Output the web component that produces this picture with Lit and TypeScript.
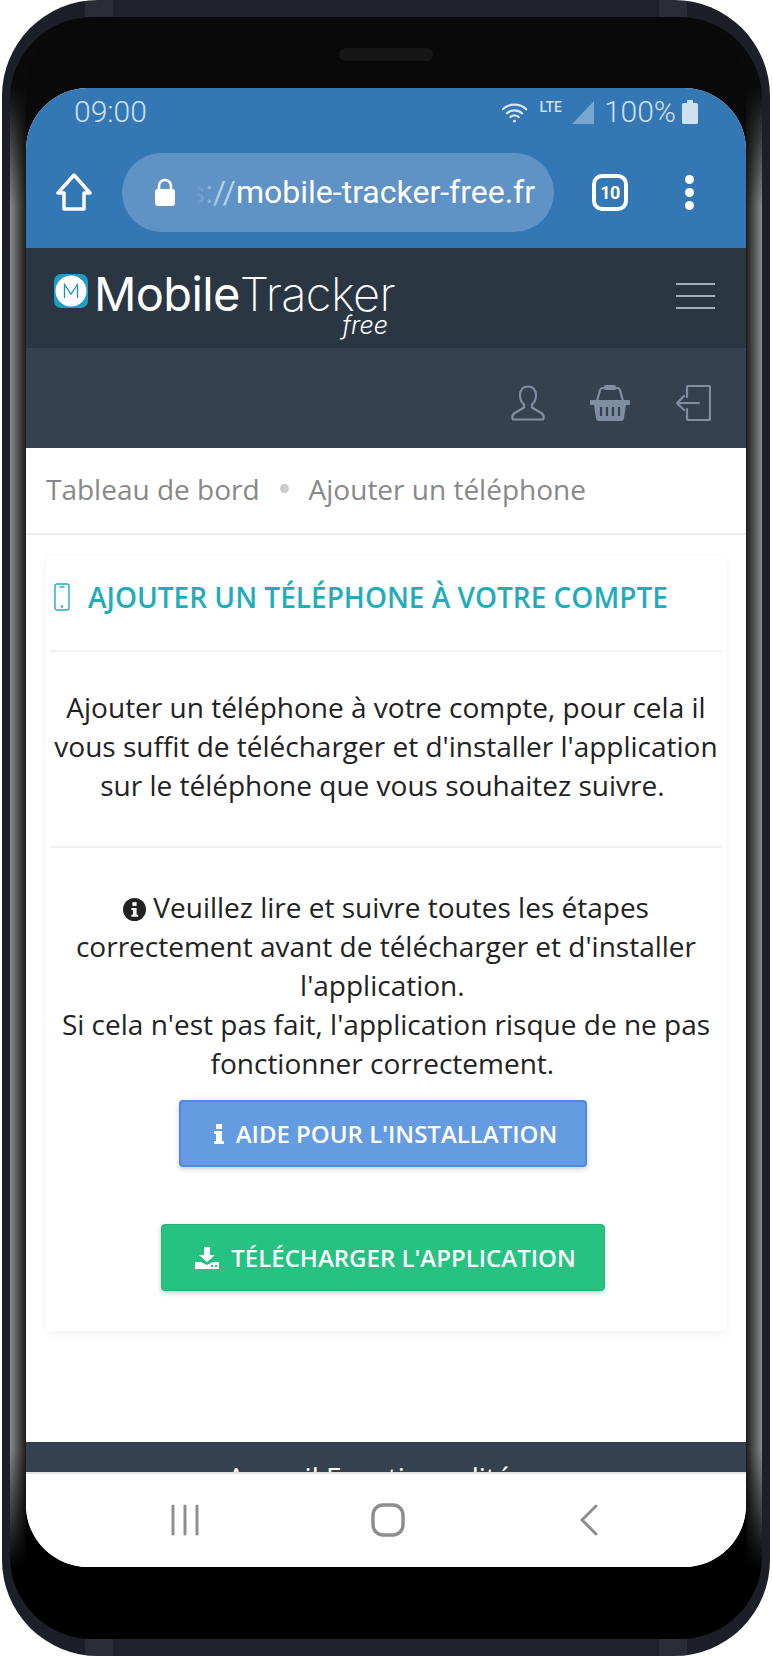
import { LitElement, html, css } from "lit";
import { customElement } from "lit/decorators.js";

@customElement("app-root")
export class AppRoot extends LitElement {
  static styles = css`
    :host { display: block; width: 772px; height: 1656px; background: #fff; font-family: "Open Sans", sans-serif; overflow: hidden; }
    * { box-sizing: border-box; }
    .phone { width: 768px; height: 1656px; margin-left: 2px; padding: 17px 8px; border-radius: 96px; background: linear-gradient(90deg, #1c1f28 83px, #2a2d36 83px, #2a2d36 111px, #20232d 111px, #20232d calc(100% - 111px), #2a2d36 calc(100% - 111px), #2a2d36 calc(100% - 83px), #1c1f28 calc(100% - 83px)); }
    .bezel { height: 100%; border-radius: 82px; padding: 71px 16px 72px; background:
      linear-gradient(#0a0a0a 70px, rgba(10,10,10,0) 190px, rgba(0,0,0,0) calc(100% - 190px), #000 calc(100% - 70px)),
      linear-gradient(90deg, #8a8a8a 0, #1c1c1c 16px, #0a0a0a 17px, #0a0a0a calc(100% - 17px), #1c1c1c calc(100% - 16px), #8a8a8a 100%);
      position: relative; }
    .bezel-in { position: absolute; inset: 0 16px; background: linear-gradient(#090909, #090909 50%, #000 50%, #000); border-radius: 70px; }
    .speaker { position: absolute; top: 31px; left: 50%; width: 94px; height: 13px; margin-left: -47px; background: #161616; border-radius: 7px; }
    .screen { position: relative; height: 1479px; width: 720px; border-radius: 62px; overflow: hidden; background: #fff; display: flex; flex-direction: column; }
    .chrome { background: #3377b5; height: 160px; flex: none; }
    .status { height: 52px; display: flex; align-items: center; padding: 0 48px 5px 48px; color: #cfe0f0; font-family: Roboto, sans-serif; font-size: 30px; }
    .status .time { flex: 1; font-weight: 300; }
    .status svg { display: block; }
    .status .pct { font-weight: 300; margin: 0 6px 0 10px; }
    .lte { font-size: 14px; font-weight: 500; align-self: flex-start; margin: 10px 9px 0 12px; line-height: 18px; }
    .toolbar { display: flex; align-items: center; height: 80px; padding: 0 0 0 30px; margin-top: 12px; }
    .url { width: 432px; height: 79px; margin-left: 30px; border-radius: 40px; background: #5f92c5; display: flex; align-items: center; padding: 0 0 0 32px; color: #fff; font-family: Roboto, sans-serif; font-size: 32px; font-weight: 400; white-space: nowrap; }
    .url .fade { color: #b8d0e8; margin-left: 20px; width: 40px; overflow: hidden; flex: none; display: flex; justify-content: flex-end; -webkit-mask-image: linear-gradient(90deg, transparent, #000 60%); mask-image: linear-gradient(90deg, transparent, #000 60%); }
    .url .fade span { flex: none; }
    .tabs { margin-left: 38px; width: 36px; height: 37px; border: 4px solid #fff; border-radius: 10px; color: #fff; font-family: Roboto, sans-serif; font-weight: 700; font-size: 18px; letter-spacing: -0.5px; display: flex; align-items: center; justify-content: center; }
    .dots { margin-left: 57px; display: flex; flex-direction: column; gap: 4px; }
    .dots i { width: 9px; height: 9px; border-radius: 50%; background: #fff; display: block; }
    .nav1 { background: #2b3643; height: 100px; flex: none; display: flex; padding: 0 31px 0 28px; justify-content: space-between; }
    .logo { display: flex; align-items: flex-start; padding-top: 21px; position: relative; }
    .logo svg { margin-top: 5px; }
    .brand { color: #fff; font-family: Inter, sans-serif; font-size: 47px; line-height: 50px; margin-left: 6px; letter-spacing: -0.65px; white-space: nowrap; }
    .brand b { font-weight: 400; }
    .brand span { font-weight: 200; }
    .free { position: absolute; right: 7px; top: 63px; color: #fff; font-family: Inter, sans-serif; font-style: italic; font-weight: 300; font-size: 25px; line-height: 28px; }
    .burger { margin-top: 35px; width: 39px; display: flex; flex-direction: column; gap: 10px; }
    .burger i { display: block; height: 2px; background: #a4aeb8; }
    .nav2 { background: #364150; height: 100px; flex: none; display: flex; justify-content: flex-end; align-items: center; gap: 45px; padding: 10px 35px 0 0; }
    .crumbs { height: 87px; border-bottom: 2px solid #eceff2; flex: none; display: flex; align-items: center; padding: 0 20px 4px; font-size: 28px; color: #888; white-space: nowrap; }
    .crumbs i { width: 9px; height: 9px; border-radius: 50%; background: #ccc; margin: 0 20px; display: block; }
    .body { flex: 1; padding: 21px 20px 0; }
    .card { background: #fff; border-radius: 4px; box-shadow: 0 2px 10px rgba(0,0,0,.06); height: 775px; padding: 0 4px; text-align: center; color: #222; font-size: 28px; line-height: 39px; }
    .head { height: 96px; border-bottom: 2px solid #eef1f5; display: flex; align-items: center; gap: 18px; color: #1fadbd; font-weight: 600; font-size: 28px; padding: 0 0 12px 4px; white-space: nowrap; text-transform: uppercase; }
    .para { height: 196px; border-bottom: 2px solid #eef1f5; padding-top: 36px; }
    .notice { padding-top: 40px; }
    .notice svg { vertical-align: -3px; }
    .actions { padding-right: 6px; }
    .btn { display: flex; width: fit-content; margin: 0 auto; align-items: center; gap: 12px; height: 67px; color: #fff; font-weight: 600; font-size: 24px; line-height: 1; border-radius: 4px; text-transform: uppercase; white-space: nowrap; box-shadow: 0 2px 5px rgba(0,0,0,.2); }
    .blue { background: #659be0; border: 2px solid #4c8be0; margin-top: 17px; padding: 0 28px 0 33px; }
    .green { background: #26c281; border: 1px solid #22b577; margin-top: 57px; padding: 0 28px 0 33px; }
    .foot { background: #364150; height: 30px; flex: none; color: #fff; text-align: center; font-size: 28px; overflow: hidden; padding-right: 20px; }
    .foot span { display: block; padding-top: 20px; line-height: 30px; }
    .sys { height: 95px; flex: none; background: #fff; border-top: 2px solid #e4e4e4; display: flex; }
    .sysin { display: flex; width: 100%; padding: 30px 0 0 144px; align-items: flex-start; }
    .s-home { margin-left: 169px; margin-top: -1px; }
    .s-back { margin-left: 172px; }
  `;

  render() {
    return html`<div class="phone"><div class="bezel"><div class="bezel-in"></div><div class="speaker"></div>
      <div class="screen">
        <div class="chrome">
          <div class="status">
            <span class="time">09:00</span>
            <svg width="27" height="24" viewBox="0 0 30 26" fill="none" stroke="#dbe7f3" stroke-width="2.4" stroke-linecap="round"><path d="M2 10c7-7 19-7 26 0M6.500 14.500c5-4.500 12-4.500 17 0M10.500 18.500c3-2.500 6-2.500 9 0"/><circle cx="15" cy="23" r="1.700" fill="#dbe7f3" stroke="none"/></svg>
            <span class="lte">LTE</span>
            <svg width="23" height="24" viewBox="0 0 23 24"><path d="M23 1V24H1Z" fill="#7aa6d2"/></svg>
            <span class="pct">100%</span>
            <svg width="16" height="24" viewBox="0 0 16 24"><path d="M5 0h6v3h3.500a1.500 1.500 0 0 1 1.500 1.500V22.500a1.500 1.500 0 0 1-1.500 1.500H1.500A1.500 1.500 0 0 1 0 22.500V4.500A1.500 1.500 0 0 1 1.500 3H5Z" fill="#cfe0f0"/></svg>
          </div>
          <div class="toolbar">
            <svg width="36" height="38" viewBox="0 0 36 38" fill="none" stroke="#fff" stroke-width="3.500" stroke-linejoin="round"><path d="M18 2 2 20h6v16h20V20h6Z"/></svg>
            <div class="url">
              <svg width="22" height="28" viewBox="0 0 22 28"><path d="M5 12V8a6 6 0 0 1 12 0v4" fill="none" stroke="#fff" stroke-width="2.600"/><rect x="1" y="11" width="20" height="17" rx="3" fill="#fff"/></svg>
              <div class="fade"><span>s://</span></div><span>mobile-tracker-free.fr</span>
            </div>
            <div class="tabs">10</div>
            <div class="dots"><i></i><i></i><i></i></div>
          </div>
        </div>
        <div class="nav1">
          <div class="logo">
            <svg width="34" height="34" viewBox="0 0 34 34"><rect width="34" height="34" rx="7" fill="#1e9ec4"/><circle cx="17" cy="17" r="15.500" fill="#fff"/><path d="M10.500 24V10.500l6.500 9.500 6.500-9.500V24" fill="none" stroke="#1c8fc0" stroke-width="1.300"/></svg>
            <div class="brand"><b>Mobile</b><span>Tracker</span></div>
            <div class="free">free</div>
          </div>
          <div class="burger"><i></i><i></i><i></i></div>
        </div>
        <div class="nav2">
          <svg width="34" height="36" viewBox="0 0 34 36" fill="none" stroke="#7f8ea3" stroke-width="2.200" stroke-linejoin="round"><path d="M17 1.500c-5.500 0-8 4-8 9 0 4 1.500 7 4 9v3l-10 6c-2 1.500-2 5-1 6h30c1-1 1-4.500-1-6l-10-6v-3c2.500-2 4-5 4-9 0-5-2.500-9-8-9Z"/></svg>
          <svg width="40" height="36" viewBox="0 0 40 36"><path d="M7 16 10 5a3 3 0 0 1 3-2h14a3 3 0 0 1 3 2l3 11" fill="none" stroke="#7f8ea3" stroke-width="2.200"/><rect x="14" y="0" width="12" height="5" rx="1.500" fill="#7f8ea3"/><path d="M1.500 15h37a1.500 1.500 0 0 1 0 5H36l-2 13a3 3 0 0 1-3 3H9a3 3 0 0 1-3-3L4 20H1.500a1.500 1.500 0 0 1 0-5Z" fill="#7f8ea3"/><path d="M12 22v9M18 22v9M24 22v9M30 22v9" stroke="#364150" stroke-width="2.200" transform="translate(-1 0)"/></svg>
          <svg width="36" height="36" viewBox="0 0 36 36" fill="none" stroke="#7f8ea3" stroke-width="2.200" stroke-linejoin="round" stroke-linecap="round"><path d="M12 12V2.500a1.500 1.500 0 0 1 1.500-1.500h20a1.500 1.500 0 0 1 1.500 1.500v31a1.500 1.500 0 0 1-1.500 1.500h-20a1.500 1.500 0 0 1-1.500-1.500V24"/><path d="M24 18H2M9 11 2 18l7 7"/></svg>
        </div>
        <div class="crumbs">Tableau de bord<i></i>Ajouter un téléphone</div>
        <div class="body">
          <div class="card">
            <div class="head">
              <svg width="16" height="28" viewBox="0 0 16 28" fill="none" stroke="#1fadbd" stroke-width="1.400"><rect x="1" y="1" width="14" height="26" rx="2"/><path d="M5.500 4h5"/><circle cx="8" cy="23.500" r="1.200" fill="#1fadbd" stroke="none"/></svg>
              <span>Ajouter un téléphone à votre compte</span>
            </div>
            <div class="para">Ajouter un téléphone à votre compte, pour cela il vous suffit de télécharger et d'installer l'application sur le téléphone que vous souhaitez suivre.&nbsp;</div>
            <div class="notice">
              <svg width="23" height="23" viewBox="0 0 22 22"><circle cx="11" cy="11" r="11" fill="#222"/><rect x="9" y="4" width="4" height="3.500" fill="#fff"/><path d="M8 9.500h5V16h1.500v2h-6.500v-2H9.500v-4.500H8Z" fill="#fff"/></svg>
              Veuillez lire et suivre toutes les étapes correctement avant de télécharger et d'installer l'application.&nbsp;<br>Si cela n'est pas fait, l'application risque de ne pas fonctionner correctement.&nbsp;
            </div>
            <div class="actions">
              <div class="btn blue">
                <svg width="10" height="20" viewBox="0 0 10 20" fill="#fff"><rect x="2" y="0" width="6" height="5"/><path d="M0 7h8v10h2v3H0v-3h2v-7H0Z"/></svg>
                <span>Aide pour l'installation</span>
              </div>
              <div class="btn green">
                <svg width="24" height="22" viewBox="0 0 24 22" fill="#fff"><path d="M9 0h6v8h5l-8 7-8-7h5Z"/><path d="M0 15h6l6 3 6-3h6v7H0Z"/><rect x="16" y="18" width="2" height="2" fill="#26c281"/><rect x="20" y="18" width="2" height="2" fill="#26c281"/></svg>
                <span>Télécharger l'application</span>
              </div>
            </div>
          </div>
        </div>
        <div class="foot"><span>Accueil Fonctionnalités</span></div>
        <div class="sys"><div class="sysin">
          <svg width="32" height="32" viewBox="0 0 32 32" stroke="#8e8e8e" stroke-width="3" stroke-linecap="round" fill="none"><path d="M3 2v28M15 2v28M27 2v28"/></svg>
          <svg class="s-home" width="34" height="34" viewBox="0 0 34 34" fill="none" stroke="#8e8e8e" stroke-width="3.400"><rect x="2" y="2" width="30" height="30" rx="10"/></svg>
          <svg class="s-back" width="22" height="32" viewBox="0 0 22 32" fill="none" stroke="#8e8e8e" stroke-width="3" stroke-linecap="round" stroke-linejoin="round"><path d="M19 2 5 16l14 14"/></svg>
        </div></div>
      </div>
    </div></div>`;
  }
}
